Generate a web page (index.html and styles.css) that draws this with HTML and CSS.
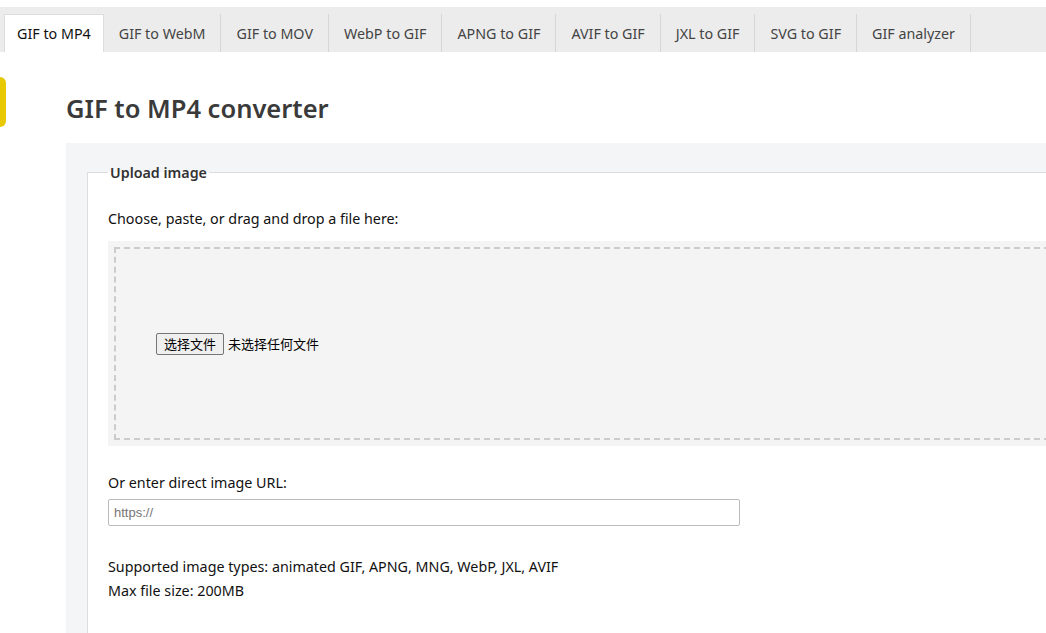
FILE: index.html
```html
<!DOCTYPE html>
<html lang="en">
<head>
    <meta charset="UTF-8">
    <meta name="viewport" content="width=device-width, initial-scale=1.0">
    <title>GIF to MP4 converter</title>
    <link rel="stylesheet" href="styles.css">
</head>
<body>
    <div class="topstrip"></div>
    <nav class="tabs">
        <a class="tab active" href="#">GIF to MP4</a>
        <a class="tab" href="#">GIF to WebM</a>
        <a class="tab" href="#">GIF to MOV</a>
        <a class="tab" href="#">WebP to GIF</a>
        <a class="tab" href="#">APNG to GIF</a>
        <a class="tab" href="#">AVIF to GIF</a>
        <a class="tab" href="#">JXL to GIF</a>
        <a class="tab" href="#">SVG to GIF</a>
        <a class="tab" href="#">GIF analyzer</a>
    </nav>

    <div class="side-flag"></div>

    <main class="main">
        <h1>GIF to MP4 converter</h1>
        <div class="panel">
            <fieldset class="upload">
                <legend>Upload image</legend>
                <p class="hint">Choose, paste, or drag and drop a file here:</p>
                <div class="dropzone">
                    <div class="dashed">
                        <label class="file">
                            <span class="file-btn">选择文件</span>
                            <span class="file-name">未选择任何文件</span>
                        </label>
                    </div>
                </div>
                <p class="url-label">Or enter direct image URL:</p>
                <input class="url" type="text" placeholder="https://">
                <p class="info">Supported image types: animated GIF, APNG, MNG, WebP, JXL, AVIF<br>Max file size: 200MB</p>
            </fieldset>
        </div>
    </main>
</body>
</html>
```

FILE: styles.css
```css
body {
    margin: 0;
    font-family: "Noto Sans", Arial, sans-serif;
    font-size: 14.3px;
    color: #111;
    background: #fff;
    overflow: hidden;
    height: 633px;
}
.topstrip {
    height: 7px;
    background: #fff;
}
.tabs {
    display: flex;
    height: 45px;
    padding: 7px 0 0 4px;
    box-sizing: border-box;
    background: #ececec;
    width: 1046px;
}
.tab {
    display: flex;
    align-items: center;
    padding: 0 15px;
    color: #444;
    text-decoration: none;
    border-right: 1px solid #d6d6d6;
    font-size: 14.3px;
}
.tab.active {
    background: #fff;
    color: #111;
    border: 1px solid #ddd;
    border-bottom: none;
    padding: 0 12px;
}
.side-flag {
    position: absolute;
    left: 0;
    top: 77px;
    width: 6px;
    height: 50px;
    background: #e8c800;
    border-radius: 0 6px 6px 0;
}
.main {
    margin-left: 66px;
    width: 1000px;
}
h1 {
    margin: 0;
    padding: 40px 0 18px;
    font-size: 25.5px;
    font-weight: 600;
    color: #3a3a3a;
    line-height: 33px;
}
.panel {
    background: #f4f5f6;
    padding: 20px 0 0 21px;
    height: 470px;
    overflow: hidden;
}
.upload {
    margin: 0;
    background: #fff;
    border: 1px solid #ddd;
    border-right: none;
    padding: 26px 0 0 20px;
    height: 480px;
    box-sizing: border-box;
}
.upload legend {
    font-weight: 600;
    color: #333;
    padding: 0 2px;
    margin-left: 0;
}
.hint {
    margin: 0 0 11px;
    line-height: 22px;
}
.dropzone {
    background: #f4f4f4;
    padding: 6px;
    height: 205px;
    box-sizing: border-box;
}
.dashed {
    height: 100%;
    border: 2px dashed #ccc;
    box-sizing: border-box;
    display: flex;
    align-items: center;
    padding-left: 40px;
}
.file {
    display: flex;
    align-items: center;
    gap: 4px;
    font-family: "Noto Sans CJK SC", sans-serif;
    font-size: 13px;
    color: #000;
}
.file-btn {
    border: 1px solid #767676;
    border-radius: 2px;
    background: #efefef;
    padding: 2px 7px;
    line-height: 16px;
}
.url-label {
    margin: 26px 0 5px;
    line-height: 22px;
}
.url {
    width: 632px;
    height: 27px;
    box-sizing: border-box;
    border: 1px solid #bbb;
    border-radius: 2px;
    padding: 0 5px;
    font-family: Arial, sans-serif;
    font-size: 13px;
}
.info {
    margin: 29px 0 0;
    line-height: 24px;
}
```
